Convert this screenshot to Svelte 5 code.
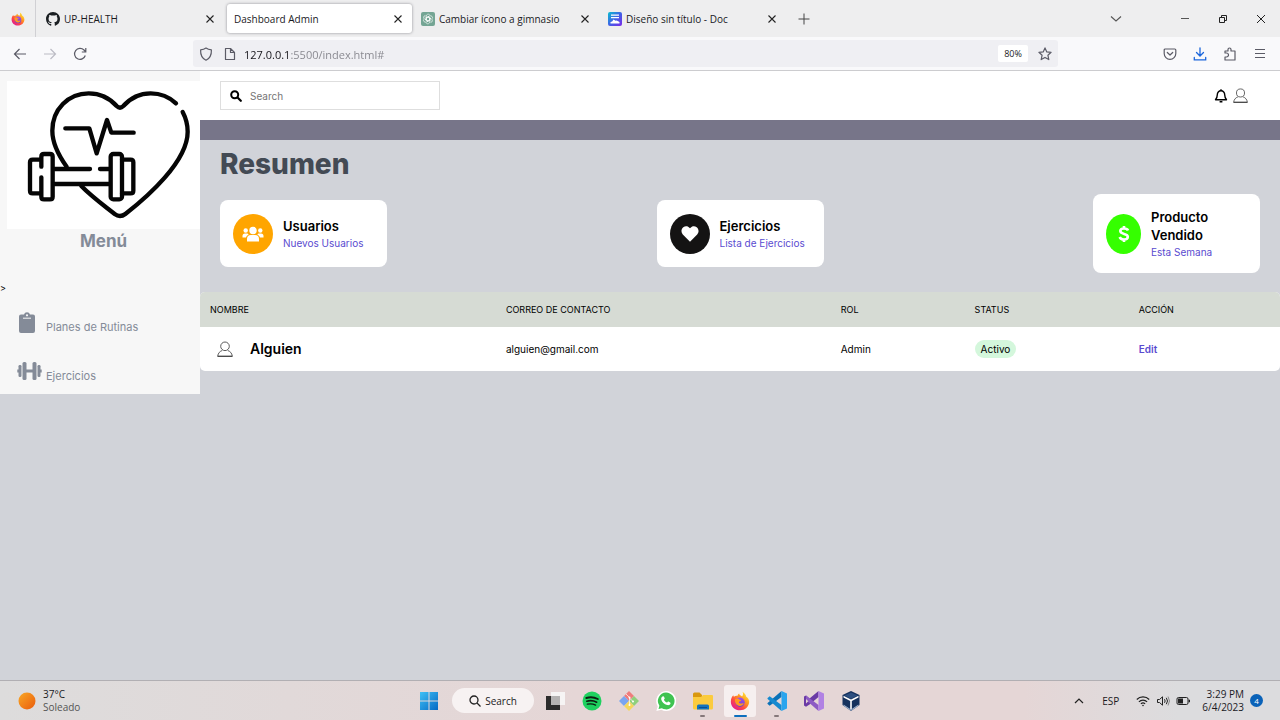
<script>
  const tabs = [
    { title: 'UP-HEALTH', icon: 'github', active: false },
    { title: 'Dashboard Admin', icon: '', active: true },
    { title: 'Cambiar ícono a gimnasio', icon: 'chat', active: false },
    { title: 'Diseño sin título - Doc', icon: 'doc', active: false }
  ];
  const menu = [
    { label: 'Planes de Rutinas', icon: 'clipboard' },
    { label: 'Ejercicios', icon: 'dumbbell' }
  ];
  const cards = [
    { title: 'Usuarios', sub: 'Nuevos Usuarios', icon: 'users', tone: 'orange' },
    { title: 'Ejercicios', sub: 'Lista de Ejercicios', icon: 'heart', tone: 'black' },
    { title: 'Producto Vendido', sub: 'Esta Semana', icon: 'dollar', tone: 'green' }
  ];
  const rows = [{ name: 'Alguien', mail: 'alguien@gmail.com', role: 'Admin', status: 'Activo' }];
  const apps = [
    { name: 'Task view', icon: 'tasks' },
    { name: 'Spotify', icon: 'spotify' },
    { name: 'Git', icon: 'git' },
    { name: 'WhatsApp', icon: 'whatsapp' },
    { name: 'Files', icon: 'folder', open: true },
    { name: 'Firefox', icon: 'firefox', current: true },
    { name: 'VS Code', icon: 'vscode', open: true },
    { name: 'Visual Studio', icon: 'vstudio' },
    { name: 'VirtualBox', icon: 'vbox' }
  ];
  let url = $state('127.0.0.1:5500/index.html#');
  let query = $state('');
</script>

{#snippet firefox(id, size)}
  <svg width={size} height={size} viewBox="0 0 24 24" aria-hidden="true">
    <defs>
      <linearGradient id="{id}-a" x1="0.85" y1="0.1" x2="0.2" y2="0.9">
        <stop offset="0" stop-color="#ffe13d" /><stop offset="0.35" stop-color="#ff9a1f" />
        <stop offset="0.7" stop-color="#ff4646" /><stop offset="1" stop-color="#e3228a" />
      </linearGradient>
      <linearGradient id="{id}-b" x1="0.5" y1="0" x2="0.5" y2="1">
        <stop offset="0" stop-color="#a450e8" /><stop offset="1" stop-color="#6a3fd0" />
      </linearGradient>
    </defs>
    <path fill="url(#{id}-a)" d="M15 1c3 2 4 4 4.300 5.500C22 8 23 11 23 13.300 22.600 19 18 23.200 12 23.200S1 19 1 12.800C1 9 2.500 6.500 4 5c.1 1 .4 1.600.8 2C6 5.800 8 5.600 9 6c0-1 .8-2.300 2-3 0 1.500 1 2 3.500 3.500C16 5 16 3 15 1z" />
    <circle cx="12" cy="13.500" r="5.600" fill="url(#{id}-b)" />
    <path fill="#ff9a1f" d="M6 10c2-1.500 4-1 5.500.5 1 0 2 .3 1.800 1-.3.900-2 .8-2.500 1.500-.5 1 .5 2.200 2.200 2 1.500-.2 2.500-.8 3.500 0-1 2.500-4.500 3.800-7 2.500S5.500 13 6 10z" />
  </svg>
{/snippet}

{#snippet person(size)}
  <svg width={size} height={size} viewBox="0 0 16 16" fill="none" stroke="#4a4a4a" stroke-width="0.9" aria-hidden="true">
    <circle cx="8" cy="5.300" r="4.300" />
    <path d="M5.200 9.500C3 10.300 1 12 .7 15.300H15.300C15 12 13 10.300 10.800 9.500" />
    <path d="M.7 15.300H15.300" stroke-width="1.300" />
  </svg>
{/snippet}

<div class="screen">
  <header class="tabs">
    <button class="pinned" aria-label="Firefox View">{@render firefox('pin', 14)}</button>
    {#each tabs as tab}
      <div class="tab" class:active={tab.active}>
        {#if tab.icon === 'github'}
          <svg width="14" height="14" viewBox="0 0 16 16" aria-hidden="true"><path fill="#1b1f23" d="M8 0C3.580 0 0 3.580 0 8c0 3.540 2.290 6.530 5.470 7.590.4.070.55-.17.55-.38 0-.19-.01-.82-.01-1.490-2.010.37-2.530-.49-2.690-.94-.09-.23-.48-.94-.82-1.130-.28-.15-.68-.52-.01-.53.63-.01 1.080.58 1.230.82.72 1.210 1.870.87 2.330.66.070-.52.280-.87.510-1.070-1.780-.2-3.640-.89-3.640-3.950 0-.87.310-1.590.82-2.150-.08-.2-.36-1.020.08-2.120 0 0 .67-.21 2.200.82a7.600 7.600 0 0 1 4 0c1.530-1.040 2.200-.82 2.200-.82.44 1.100.16 1.920.08 2.120.51.56.82 1.270.82 2.150 0 3.070-1.870 3.750-3.650 3.950.29.25.54.73.54 1.480 0 1.070-.01 1.930-.01 2.200 0 .21.150.46.55.38A8 8 0 0 0 16 8c0-4.420-3.580-8-8-8z" /></svg>
        {:else if tab.icon === 'chat'}
          <svg width="14" height="14" viewBox="0 0 14 14" aria-hidden="true">
            <rect width="14" height="14" rx="2" fill="#74a594" />
            <g fill="none" stroke="#fff" stroke-width="0.6">
              {#each [0, 60, 120, 180, 240, 300] as a}
                <path transform="rotate({a} 7 7)" d="M5.200 7.800V4.200a2 2 0 0 1 3.600-1.200M5.200 5.900 7 4.900l3 1.700" />
              {/each}
            </g>
          </svg>
        {:else if tab.icon === 'doc'}
          <svg width="14" height="14" viewBox="0 0 14 14" aria-hidden="true">
            <defs><linearGradient id="docbg" x1="0" y1="0" x2="1" y2="1"><stop offset="0" stop-color="#08bfd0" /><stop offset="0.5" stop-color="#3f62e6" /><stop offset="1" stop-color="#7d2ae8" /></linearGradient></defs>
            <rect width="14" height="14" rx="2" fill="url(#docbg)" />
            <path fill="#fff" d="M3 2.500h8v1.300H3zM3 5h8v1.300H3zM2.500 11.500V10l1.700-.6 1.300-1.800 2 1.200 1.200-.4 2.800 1.600v1.500z" />
          </svg>
        {/if}
        <span class="tab-title">{tab.title}</span>
        <button class="close" aria-label="Cerrar {tab.title}">
          <svg width="12" height="12" viewBox="0 0 12 12" stroke="#222" stroke-width="1.100" aria-hidden="true"><path d="M2.500 2.500l7 7M9.500 2.500l-7 7" /></svg>
        </button>
      </div>
    {/each}
    <button class="new-tab" aria-label="Nueva pestaña"><svg width="12" height="12" viewBox="0 0 12 12" stroke="#444" aria-hidden="true"><path d="M6 .5v11M.5 6h11" /></svg></button>
    <div class="window-controls">
      <button class="list-tabs" aria-label="Lista de pestañas"><svg width="12" height="8" viewBox="0 0 12 8" fill="none" stroke="#555" stroke-width="1.100" aria-hidden="true"><path d="M1 1.500l5 4.500 5-4.500" /></svg></button>
      <button aria-label="Minimizar"><svg width="10" height="10" viewBox="0 0 10 10" stroke="#555" aria-hidden="true"><path d="M1 4.500h8" /></svg></button>
      <button aria-label="Restaurar"><svg width="10" height="10" viewBox="0 0 10 10" fill="none" stroke="#222" aria-hidden="true"><path d="M1.500 3.500h5v5h-5zM3.500 3V1.500h5v5H7" /></svg></button>
      <button aria-label="Cerrar"><svg width="10" height="10" viewBox="0 0 10 10" stroke="#222" aria-hidden="true"><path d="M1 1l8 8M9 1l-8 8" /></svg></button>
    </div>
  </header>

  <nav class="toolbar">
    <div class="history">
      <button aria-label="Atrás"><svg width="14" height="14" viewBox="0 0 14 14" fill="none" stroke="#5b5b66" stroke-width="1.200" aria-hidden="true"><path d="M13 7H1.500M6.500 2l-5 5 5 5" /></svg></button>
      <button aria-label="Adelante"><svg width="14" height="14" viewBox="0 0 14 14" fill="none" stroke="#bcbcc4" stroke-width="1.200" aria-hidden="true"><path d="M1 7h11.500M7.500 2l5 5-5 5" /></svg></button>
      <button aria-label="Recargar"><svg width="14" height="14" viewBox="0 0 14 14" fill="none" stroke="#5b5b66" stroke-width="1.200" aria-hidden="true"><path d="M12.300 8.500A5.500 5.500 0 1 1 11 3l1.500 1.500M12.800 1v4H8.800" /></svg></button>
    </div>
    <div class="address">
      <svg width="14" height="14" viewBox="0 0 14 14" fill="none" stroke="#5b5b66" stroke-width="1.200" stroke-linejoin="round" aria-hidden="true"><path d="M7 1c1.600 1.200 3.300 1.700 5.400 1.900C12.600 8 10.800 11.400 7 13.200 3.200 11.400 1.400 8 1.600 2.900 3.700 2.700 5.400 2.200 7 1z" /></svg>
      <svg class="page-icon" width="14" height="14" viewBox="0 0 14 14" fill="none" stroke="#5b5b66" stroke-width="1.200" stroke-linejoin="round" aria-hidden="true"><path d="M2.500 1.500h5l4 4v7h-9zM7.500 1.500v4h4" /></svg>
      <input class="url" aria-label="Dirección" bind:value={url} />
      <button class="zoom">80%</button>
      <button aria-label="Marcador"><svg width="14" height="14" viewBox="0 0 14 14" fill="none" stroke="#5b5b66" stroke-width="1.200" stroke-linejoin="round" aria-hidden="true"><path d="M7 .9l1.800 4 4.300.4-3.200 2.900.9 4.400L7 10.400l-3.800 2.200.9-4.400L.9 5.300l4.300-.4z" /></svg></button>
    </div>
    <div class="tools">
      <button aria-label="Pocket"><svg width="14" height="14" viewBox="0 0 14 14" fill="none" stroke="#5b5b66" stroke-width="1.200" stroke-linecap="round" stroke-linejoin="round" aria-hidden="true"><path d="M2.200 2h9.600q1 0 1 1v3.500a5.800 5.800 0 0 1-11.600 0V3q0-1 1-1zM4.300 5.500 7 8l2.700-2.500" /></svg></button>
      <button aria-label="Descargas"><svg width="14" height="14" viewBox="0 0 14 14" fill="none" stroke="#1c67dc" stroke-width="1.300" stroke-linecap="round" aria-hidden="true"><path d="M7 .8v8M3.500 5.500 7 9l3.500-3.500M1.300 10.500v2.300h11.400v-2.300" /></svg></button>
      <button aria-label="Extensiones"><svg width="14" height="14" viewBox="0 0 14 14" fill="none" stroke="#5b5b66" stroke-width="1.200" stroke-linejoin="round" aria-hidden="true"><path d="M2 6V4h3V2.500a1.500 1.500 0 0 1 3 0V4h4v9H2v-3h1.500a2 2 0 0 0 0-4z" /></svg></button>
      <button aria-label="Menú"><svg width="14" height="14" viewBox="0 0 14 14" stroke="#5b5b66" aria-hidden="true"><path d="M2 2.500h10M2 6.500h10M2 10.500h10" /></svg></button>
    </div>
  </nav>

  <div class="page">
    <aside class="sidebar">
      <svg class="logo" viewBox="21 33 579 444" role="img" aria-label="UP Health">
        <rect x="21" y="33" width="579" height="444" fill="#fff" />
        <g fill="none" stroke="#050505" stroke-width="13" stroke-linecap="round" stroke-linejoin="round">
          <path d="M200 290C175 255 157 220 157 182C157 118 205 70 266 70C302 70 328 83 350 108Q360 118 370 108C392 83 418 70 452 70C482 70 508 81 528 100" />
          <path d="M548 126C558 145 563 165 563 185C563 275 440 382 376 432Q360 444 344 432C310 405 275 380 244 348" />
          <path d="M196 175H268L290 250L321 150L334 188H401" />
          <path d="M124 290V260q0-8 8-8h18q8 0 8 8V380q0 8-8 8H132q-8 0-8-8V322M124 269H98q-8 0-8 8V362q0 8 8 8H124" />
          <rect x="332" y="252" width="34" height="136" rx="8" />
          <path d="M366 269H392q8 0 8 8V362q0 8-8 8H366M164 297H270M300 297H326M164 342H326" />
        </g>
      </svg>
      <h2>Menú</h2>
      <div class="stray">&gt;</div>
      <ul class="menu">
        {#each menu as item}
          <li>
            <a href="#{item.icon}">
              {#if item.icon === 'clipboard'}
                <svg width="20" height="22" viewBox="0 0 20 22" aria-hidden="true">
                  <path fill="#848b98" d="M4 2.500h3a3.100 3.100 0 0 1 6 0h3a2 2 0 0 1 2 2V19a2 2 0 0 1-2 2H4a2 2 0 0 1-2-2V4.500a2 2 0 0 1 2-2z" />
                  <circle cx="10" cy="3.300" r="1.100" fill="#f7f7f7" /><path d="M6 6.200h8" stroke="#f7f7f7" />
                </svg>
              {:else}
                <svg class="wide" width="26" height="20" viewBox="0 0 26 20" fill="#848b98" aria-hidden="true">
                  <rect x="5.500" y="1" width="4" height="18" rx="1.500" /><rect x="15.500" y="1" width="4" height="18" rx="1.500" />
                  <rect x="1.500" y="4" width="3" height="12" rx="1.200" /><rect x="20.500" y="4" width="3" height="12" rx="1.200" />
                  <path d="M9 8.500h7v3H9zM.3 8.500h2v3h-2zM22.700 8.500h2v3h-2z" />
                </svg>
              {/if}
              <span>{item.label}</span>
            </a>
          </li>
        {/each}
      </ul>
    </aside>

    <main class="content">
      <div class="topbar">
        <label class="search">
          <svg width="12" height="12" viewBox="0 0 12 12" fill="none" stroke="#000" aria-hidden="true"><circle cx="4.700" cy="4.700" r="3.500" stroke-width="2" /><path d="M7.500 7.500l3.300 3.300" stroke-width="2.200" stroke-linecap="round" /></svg>
          <input type="search" aria-label="Search" placeholder="Search" bind:value={query} />
        </label>
        <div class="user">
          <button aria-label="Notificaciones"><svg width="14" height="14" viewBox="0 0 14 14" fill="none" stroke="#000" stroke-width="1.400" stroke-linejoin="round" aria-hidden="true"><path d="M7 1.800c-2.300 0-3.700 1.700-3.700 4C3.300 8.500 2.500 9.500 1.500 10.700h11C11.500 9.500 10.700 8.500 10.700 5.800c0-2.300-1.400-4-3.700-4z" /><path d="M7 .2v1.600M5.600 12.800h2.800" /></svg></button>
          <button aria-label="Perfil">{@render person(15)}</button>
        </div>
      </div>
      <div class="band"></div>
      <h1>Resumen</h1>
      <section class="cards">
        {#each cards as card}
          <article class="card">
            <div class="disc {card.tone}">
              {#if card.icon === 'users'}
                <svg width="22" height="18" viewBox="0 0 22 18" fill="#fff" aria-hidden="true">
                  <circle cx="11" cy="5.500" r="3.700" /><circle cx="3.700" cy="5.500" r="2.200" /><circle cx="18.300" cy="5.500" r="2.200" />
                  <path d="M5 16.500V14a4 4 0 0 1 4-4h4a4 4 0 0 1 4 4v2.500zM.5 12.500V11a2.500 2.500 0 0 1 2.500-2.500h2.500l1.200.9C5 10.500 4.300 11.300 4 12.500zM21.500 12.500V11A2.500 2.500 0 0 0 19 8.500h-2.500l-1.200.9c1.700 1.100 2.400 1.900 2.700 3.100z" />
                </svg>
              {:else if card.icon === 'heart'}
                <svg width="18" height="16" viewBox="0 0 18 16" fill="#fff" aria-hidden="true"><path d="M9 15.800 1.800 8.400C-.2 6.200.1 3 2.300 1.300 4.300-.3 7-.1 9 2.300c2-2.400 4.700-2.600 6.700-1C17.900 3 18.200 6.200 16.200 8.400z" /></svg>
              {:else}
                <svg width="12" height="18" viewBox="0 0 12 18" fill="none" stroke="#fff" stroke-width="2.600" aria-hidden="true"><path d="M10 5.500C9.500 4 8 3.500 6 3.500 3.800 3.500 2.300 4.500 2.300 6.100 2.300 9.800 9.800 8 9.800 11.700 9.800 13.500 8.200 14.500 6 14.500 3.700 14.500 2.300 13.700 1.700 12M6 1v3M6 14v3" /></svg>
              {/if}
            </div>
            <div class="card-text">
              <h3>{card.title}</h3>
              <p>{card.sub}</p>
            </div>
          </article>
        {/each}
      </section>
      <table>
        <colgroup><col class="c-name" /><col class="c-mail" /><col class="c-role" /><col class="c-status" /><col /></colgroup>
        <thead>
          <tr><th>NOMBRE</th><th>CORREO DE CONTACTO</th><th>ROL</th><th>STATUS</th><th>ACCIÓN</th></tr>
        </thead>
        <tbody>
          {#each rows as row}
            <tr>
              <td><div class="who">{@render person(16)}<strong>{row.name}</strong></div></td>
              <td>{row.mail}</td>
              <td>{row.role}</td>
              <td><span class="pill">{row.status}</span></td>
              <td><a class="edit" href="#edit">Edit</a></td>
            </tr>
          {/each}
        </tbody>
      </table>
    </main>
  </div>

  <footer class="taskbar">
    <div class="weather">
      <svg width="18" height="18" viewBox="0 0 18 18" aria-hidden="true"><defs><linearGradient id="sun" x1="0" y1="0" x2="1" y2="1"><stop offset="0" stop-color="#f9a825" /><stop offset="1" stop-color="#ea5b0c" /></linearGradient></defs><circle cx="9" cy="9" r="8.500" fill="url(#sun)" /></svg>
      <div><div>37°C</div><div class="sky">Soleado</div></div>
    </div>
    <div class="dock">
      <button class="app" aria-label="Inicio">
        <svg width="20" height="20" viewBox="0 0 20 20" aria-hidden="true"><defs><linearGradient id="win" x1="0" y1="0" x2="1" y2="1"><stop offset="0" stop-color="#3fc0f5" /><stop offset="1" stop-color="#0569c4" /></linearGradient></defs><path fill="url(#win)" d="M1 1h8.500v8.500H1zM10.500 1H19v8.500h-8.500zM1 10.500h8.500V19H1zM10.500 10.500H19V19h-8.500z" /></svg>
      </button>
      <button class="find">
        <svg width="12" height="12" viewBox="0 0 12 12" fill="none" stroke="#222" stroke-width="1.300" aria-hidden="true"><circle cx="5" cy="5" r="4" /><path d="M8 8l3.500 3.500" /></svg>
        Search
      </button>
      {#each apps as app}
        <button class="app" class:current={app.current} class:open={app.open} aria-label={app.name}>
          {#if app.icon === 'tasks'}
            <svg width="20" height="20" viewBox="0 0 20 20" aria-hidden="true"><rect x="1" y="5" width="14" height="14" fill="#2b2b2b" /><rect x="6" y="1" width="14" height="13" fill="#f6f4f4" /><rect x="6" y="5" width="9" height="9" fill="#b4b2b2" /></svg>
          {:else if app.icon === 'spotify'}
            <svg width="20" height="20" viewBox="0 0 20 20" fill="none" stroke="#0b1f12" stroke-linecap="round" aria-hidden="true"><circle cx="10" cy="10" r="9.500" fill="#1ed15f" stroke="none" /><path stroke-width="1.900" d="M4.300 7c3.700-1.100 8-.8 11.500 1" /><path stroke-width="1.600" d="M4.800 10.200c3.300-.9 6.900-.6 9.900 1" /><path stroke-width="1.300" d="M5.300 13.200c2.900-.7 5.800-.4 8.300.9" /></svg>
          {:else if app.icon === 'git'}
            <svg width="20" height="20" viewBox="0 0 20 20" aria-hidden="true"><path fill="#ef7c7c" d="M10 0l5 5-5 5-5-5z" /><path fill="#7aa5f0" d="M5 5l5 5-5 5-5-5z" /><path fill="#8fd07c" d="M15 5l5 5-5 5-5-5z" /><path fill="#f5d65c" d="M10 10l5 5-5 5-5-5z" /><path stroke="#fff" stroke-width="0.7" fill="none" d="M7 3l3.500 3.500V14M10.500 7l3.500 3.500" /><circle cx="10.500" cy="6.500" r="1" fill="#fff" /><circle cx="10.500" cy="14" r="1" fill="#fff" /><circle cx="14" cy="10.500" r="1" fill="#fff" /></svg>
          {:else if app.icon === 'whatsapp'}
            <svg width="20" height="20" viewBox="0 0 20 20" aria-hidden="true"><path fill="#fff" d="M10 0a10 10 0 1 1-4.600 18.700L.4 20l1.300-4.800A10 10 0 0 1 10 0z" /><path fill="#3fc351" d="M10 1.600a8.400 8.400 0 1 1-4.200 15.600L2.500 18l.9-3.200A8.400 8.400 0 0 1 10 1.600z" /><path fill="#fff" d="M7 5.300c.5-.2.800 0 1 .5l.7 1.500c.1.400-.4 1-.8 1.400.7 1.400 1.700 2.300 3.200 2.900.4-.4.800-1.200 1.300-1l1.700.8c.5.300.5.600.4 1.100-.4 1.500-2 1.900-3.400 1.500-3-.9-5-3-5.800-5.300-.4-1.400.4-3 1.700-3.400z" /></svg>
          {:else if app.icon === 'folder'}
            <svg width="22" height="20" viewBox="0 0 22 20" aria-hidden="true"><path fill="#d9970e" d="M1 3q0-1.500 1.500-1.500h5L10 4v3H1z" /><path fill="#fbcb3e" d="M1 6h8l2-2h9q1 0 1 1v12q0 1.500-1.500 1.500h-17Q1 18.500 1 17z" /><path fill="#1273bd" d="M5 18.500V15q0-1.500 1.500-1.500h9Q17 13.500 17 15v3.500z" /><path fill="#0a4f90" d="M7 16h8v1H7z" /></svg>
          {:else if app.icon === 'firefox'}
            {@render firefox('dock', 20)}
          {:else if app.icon === 'vscode'}
            <svg width="20" height="20" viewBox="0 0 20 20" aria-hidden="true"><path fill="#0b72b8" d="M14.500 0v6L2.700 14.800.6 13.100q-.5-.5 0-1z" /><path fill="#168ad0" d="M14.500 20v-6L2.700 5.200.6 6.900q-.5.500 0 1z" /><path fill="#2aa5ee" d="M14.500 0 20 2.500v15L14.500 20z" /></svg>
          {:else if app.icon === 'vstudio'}
            <svg width="20" height="20" viewBox="0 0 20 20" aria-hidden="true"><path fill="#6a3aa5" d="M0 5.500 2 4.500l3.500 3L14.500 0v6L5.500 13.500 2 15.800 0 14.500z" /><path fill="#8d5bc4" d="M2 4.500 14.500 14v6L2 9z" /><path fill="#b182e3" d="M14.500 0 20 2.500v15L14.500 20z" /><path fill="#e5d5d5" d="M2 8v4.500L4.300 10.200z" /></svg>
          {:else}
            <svg width="18" height="20" viewBox="0 0 18 20" aria-hidden="true"><path fill="#16325e" d="M9 0l8.500 4v10L9 20 .5 14V4z" /><path fill="#2d4f80" d="M9 1.500l6.500 3L9 7.800 2.500 4.500z" /><path fill="#fff" d="M1.500 4.800 9 8.500l7.500-3.700v1.700L9.800 10v8.200H8.200V10L1.500 6.500z" /><path fill="#9fb4d0" d="M1.500 13.500 9 18.600l7.500-5.100-.1 1.300L9 19.800l-7.400-5z" /></svg>
          {/if}
        </button>
      {/each}
    </div>
    <div class="tray">
      <button aria-label="Iconos ocultos"><svg width="10" height="8" viewBox="0 0 10 8" fill="none" stroke="#222" stroke-width="1.200" aria-hidden="true"><path d="M1 6l4-4 4 4" /></svg></button>
      <button class="lang">ESP</button>
      <button class="status" aria-label="Red, sonido y batería">
        <svg width="14" height="12" viewBox="0 0 14 12" fill="none" stroke="#222" stroke-width="1.200" aria-hidden="true"><path d="M.8 4.500a8.600 8.600 0 0 1 12.400 0M2.900 6.800a5.700 5.700 0 0 1 8.200 0M4.900 8.900a3 3 0 0 1 4.200 0" /><circle cx="7" cy="10.500" r=".8" fill="#222" stroke="none" /></svg>
        <svg width="14" height="12" viewBox="0 0 14 12" fill="none" stroke="#222" aria-hidden="true"><path d="M1.500 4.500h2l3-2.700v8.400l-3-2.700h-2zM8.500 4.200q1.300 1.800 0 3.600M10.300 2.800q2.400 3.200 0 6.400" /><path stroke="#888" d="M12 1.500q3 4.500 0 9" /></svg>
        <svg width="14" height="12" viewBox="0 0 14 12" fill="none" stroke="#222" aria-hidden="true"><rect x="1" y="2.500" width="11" height="7" rx="1.500" /><rect x="2.500" y="4" width="4" height="4" fill="#222" /><path d="M13.300 4.800v2.400" stroke-width="1.400" /></svg>
      </button>
      <div class="clock"><div>3:29 PM</div><div>6/4/2023</div></div>
      <span class="badge">4</span>
    </div>
  </footer>
</div>

<style>
  :global(body) { margin: 0; }
  .screen {
    min-height: 100vh;
    display: flex;
    flex-direction: column;
    font: 10px/14px "Open Sans", "Noto Sans", sans-serif;
    color: #1a1a1e;
  }
  .screen, .screen * { box-sizing: border-box; }
  button, input { font: inherit; color: inherit; }
  button {
    display: flex;
    align-items: center;
    justify-content: center;
    padding: 0;
    border: 0;
    background: none;
  }
  svg { display: block; flex: none; }
  h1, h2, h3, p, ul { margin: 0; padding: 0; }

  .tabs { display: flex; height: 37px; background: #eeeeef; }
  .pinned { width: 36px; margin-right: 1px; border-right: 1px solid #d0d0d4; }
  .tab {
    flex: 0 1 187px;
    min-width: 0;
    display: flex;
    align-items: center;
    gap: 4px;
    padding: 0 8px 0 9px;
  }
  .tab.active {
    flex-basis: 185px;
    margin: 4px 0 4px 3px;
    padding-left: 7px;
    border-radius: 3px;
    background: #fff;
    box-shadow: 0 0 3px #8c8c94;
  }
  .tab-title { flex: 1; overflow: hidden; white-space: nowrap; }
  .close { width: 12px; }
  .new-tab { width: 36px; }
  .window-controls { display: flex; margin-left: auto; }
  .window-controls button { width: 38px; }
  .window-controls .list-tabs { margin-right: 31px; }

  .toolbar {
    display: flex;
    align-items: center;
    height: 34px;
    border-bottom: 1px solid #cccccf;
    background: #f9f9fb;
  }
  .history { display: flex; gap: 16px; width: 193px; padding-left: 13px; }
  .address {
    flex: 1;
    display: flex;
    align-items: center;
    height: 27px;
    padding: 0 6px;
    border-radius: 3px;
    background: #efeff3;
  }
  .page-icon { margin-left: 10px; }
  .url {
    flex: 1;
    min-width: 0;
    margin-left: 7px;
    padding: 2px 0 0;
    border: 0;
    outline: 0;
    font-size: 11px;
    color: transparent;
    caret-color: #15141a;
    background: linear-gradient(to right, #15141a 46px, #85858c 46px);
    background-clip: text;
  }
  .zoom {
    width: 30px;
    height: 17px;
    margin-right: 10px;
    border-radius: 2px;
    font-size: 9px;
    background: #fff;
  }
  .tools { display: flex; justify-content: flex-end; gap: 16px; width: 222px; padding-right: 13px; }

  .page {
    flex: 1;
    display: flex;
    align-items: flex-start;
    font: 11px/16px Inter, sans-serif;
    color: #000;
    background: #d1d3d9;
  }
  .sidebar { flex: none; width: 200px; padding: 10px 0 8px; background: #f7f7f7; }
  .logo { width: 193px; margin-left: 7px; }
  .sidebar h2 {
    padding-left: 7px;
    font-size: 17px;
    line-height: 24px;
    font-weight: 700;
    text-align: center;
    color: #848b98;
  }
  .stray { margin-top: 27px; font-size: 9px; }
  .menu { margin-top: 16px; list-style: none; }
  .menu li + li { margin-top: 24px; }
  .menu a {
    display: flex;
    align-items: flex-start;
    gap: 9px;
    height: 25px;
    padding-left: 17px;
    text-decoration: none;
    color: #848b98;
  }
  .menu .wide { margin-right: -6px; }
  .menu span { padding-top: 7px; }

  .content { flex: 1; min-width: 0; }
  .topbar {
    display: flex;
    align-items: center;
    justify-content: space-between;
    height: 49px;
    padding: 0 32px 0 20px;
    background: #fff;
  }
  .search {
    display: flex;
    align-items: center;
    gap: 8px;
    width: 220px;
    height: 29px;
    padding: 0 9px;
    border: 1px solid #dedede;
  }
  .search input { flex: 1; min-width: 0; padding: 0; border: 0; outline: 0; font-size: 10px; background: none; }
  .search input::placeholder { color: #757575; opacity: 1; }
  .user { display: flex; gap: 5px; }
  .band { height: 20px; background: #777589; }
  h1 { padding: 8px 20px; font-size: 28px; line-height: 32px; font-weight: 800; color: #434a54; }
  .cards {
    display: flex;
    align-items: center;
    justify-content: space-between;
    padding: 6px 20px 19px;
  }
  .card {
    display: flex;
    align-items: center;
    gap: 10px;
    width: 167px;
    padding: 14px 13px 13px;
    border-radius: 8px;
    background: #fff;
  }
  .disc {
    display: flex;
    flex: none;
    align-items: center;
    justify-content: center;
    width: 40px;
    height: 40px;
    border-radius: 50%;
  }
  .orange { background: #ffa500; }
  .black { background: #141313; }
  .green { width: 35px; background: #35ff00; }
  .card-text { flex: 1; min-width: 0; }
  .card h3 { font-size: 13px; line-height: 18px; font-weight: 600; }
  .card p { font-size: 10px; white-space: nowrap; color: #5a4bd0; }

  table { width: 100%; border-collapse: collapse; table-layout: fixed; font-size: 10px; border-radius: 5px; overflow: hidden; background: #fff; }
  .c-name { width: 27.400%; }
  .c-mail { width: 31%; }
  .c-role { width: 12.400%; }
  .c-status { width: 15.200%; }
  th, td { padding: 0 10px; text-align: left; font-weight: 400; }
  th { height: 35px; font-size: 9px; background: #d6dbd4; }
  td { height: 44px; }
  .who { display: flex; align-items: center; gap: 17px; padding-left: 7px; }
  .who strong { font-size: 14px; font-weight: 600; }
  .pill { display: inline-block; padding: 1px 6px; border-radius: 9px; background: #d4f7dc; }
  .edit { font-weight: 600; text-decoration: none; color: #5a4bd0; }

  .taskbar {
    display: grid;
    grid-template-columns: 1fr auto 1fr;
    align-items: center;
    height: 40px;
    border-top: 1px solid #b1afb3;
    background: linear-gradient(to right, #dddcdc, #e5d6d6 45%, #e5d6d6 80%, #dcdcde 92%);
  }
  .weather { display: flex; align-items: center; gap: 7px; padding-left: 18px; line-height: 13px; }
  .sky { color: #555; }
  .dock { display: flex; align-items: center; gap: 5px; }
  .app { position: relative; width: 32px; height: 32px; border-radius: 3px; }
  .current { background: #f6efef; }
  .open::after, .current::after {
    content: "";
    position: absolute;
    bottom: 0;
    left: 50%;
    width: 5px;
    height: 2px;
    margin-left: -3px;
    border-radius: 1px;
    background: #85787a;
  }
  .current::after { width: 13px; margin-left: -6px; background: #0d6fbe; }
  .find { gap: 4px; width: 82px; height: 25px; margin-left: 2px; border-radius: 13px; background: #f7f2f2; }
  .tray { display: flex; align-items: center; justify-content: flex-end; padding-right: 17px; }
  .lang { margin: 0 17px 0 18px; }
  .status { gap: 6px; }
  .clock { margin: 0 6px 0 12px; line-height: 13px; text-align: right; }
  .badge {
    width: 13px;
    height: 13px;
    border-radius: 50%;
    font-size: 8px;
    line-height: 13px;
    text-align: center;
    color: #fff;
    background: #0a62b8;
  }
</style>
